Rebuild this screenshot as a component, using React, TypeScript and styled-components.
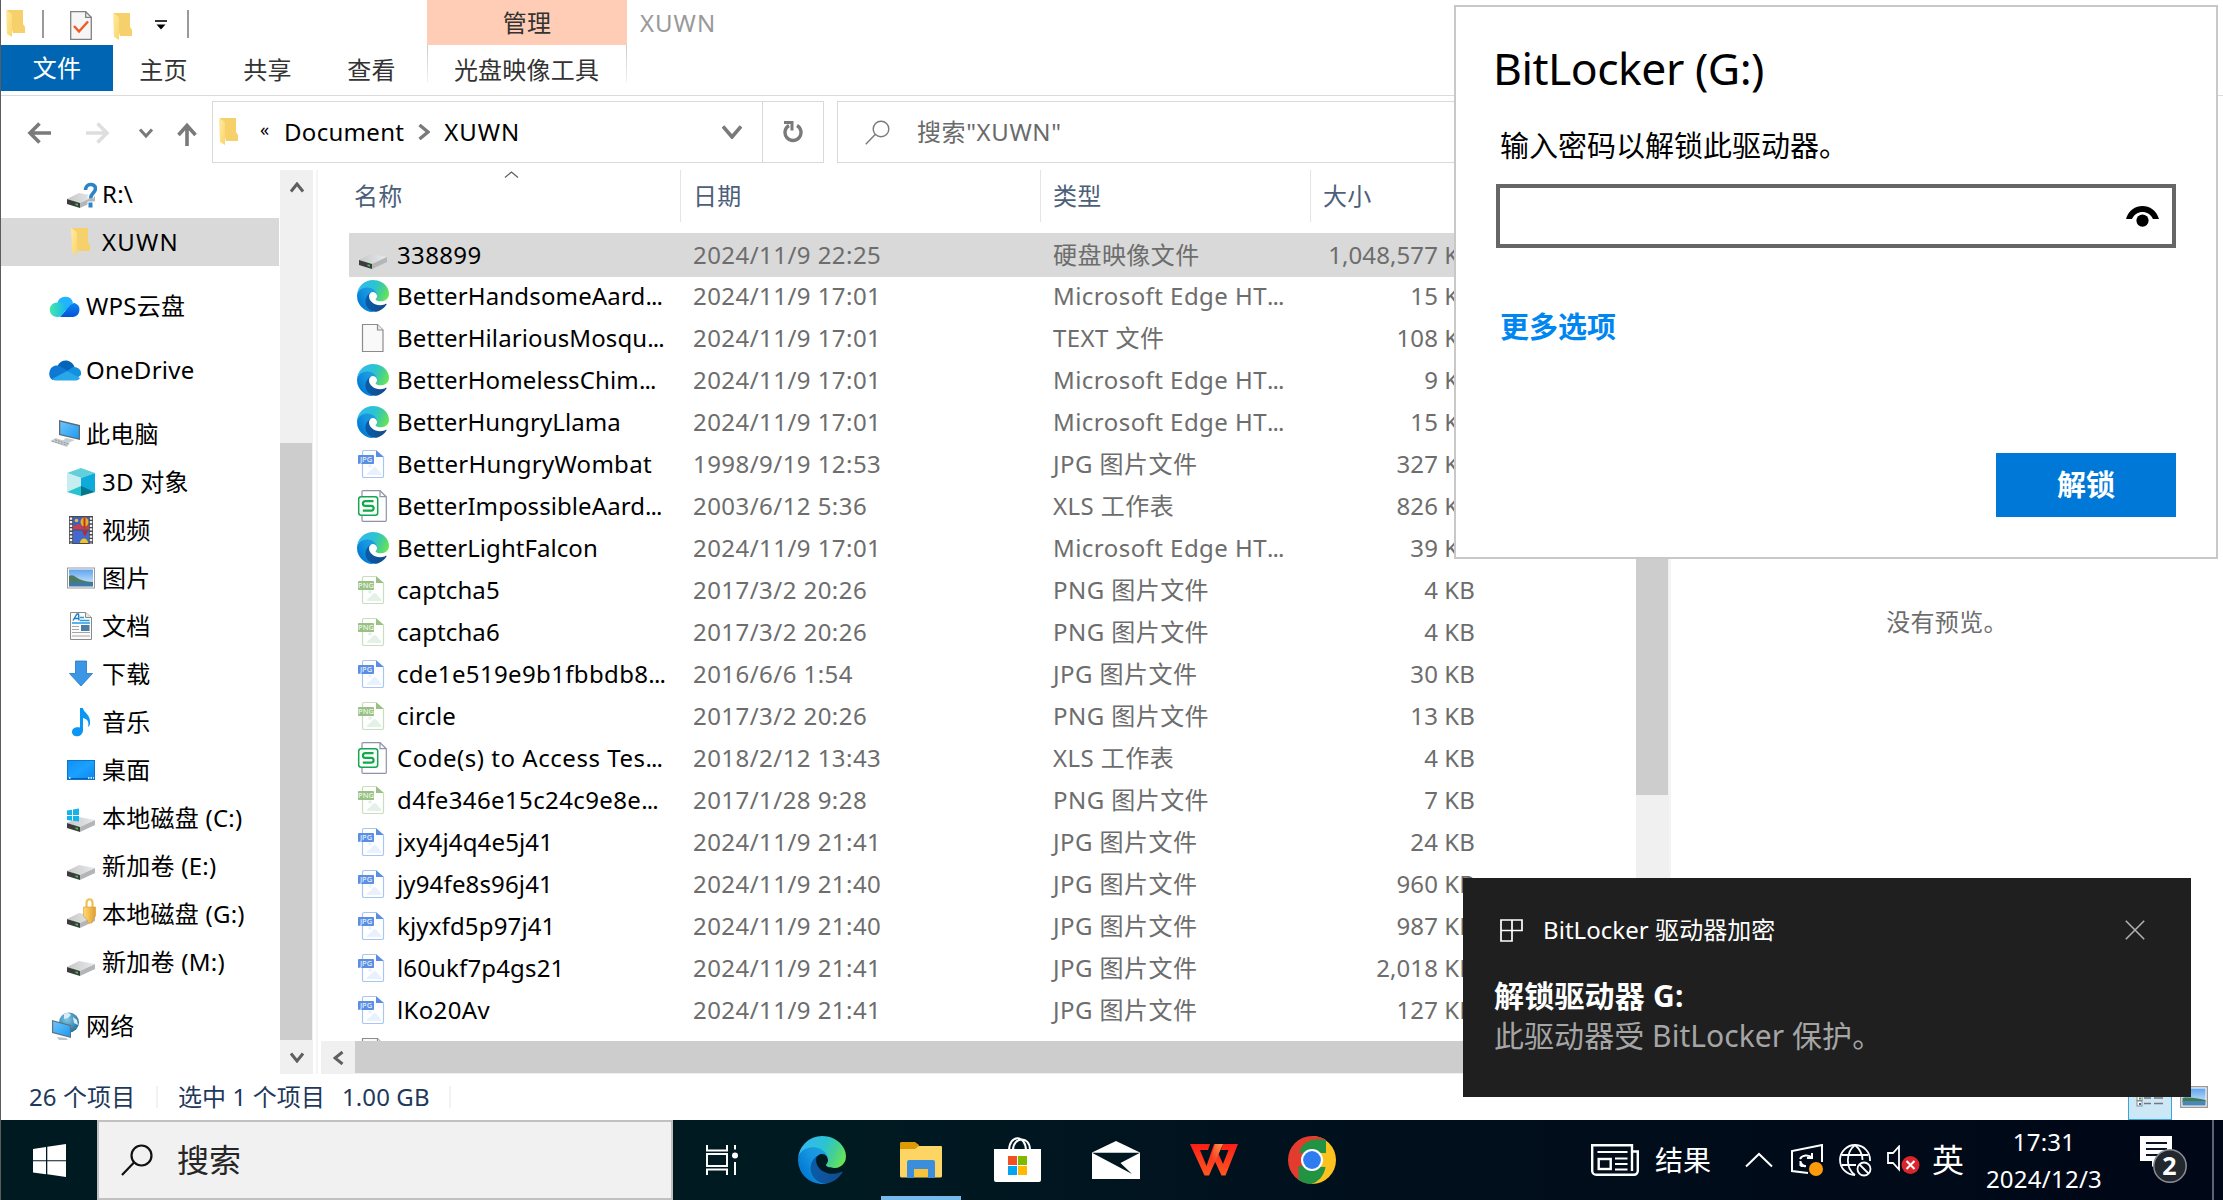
import React from 'react';
import styled, { createGlobalStyle } from 'styled-components';

const sans = `"Noto Sans", "Noto Sans CJK SC", sans-serif`;

const Global = createGlobalStyle`
  * { box-sizing: border-box; }
  body { margin: 0; background: #fff; font-family: ${sans}; overflow: hidden; }
  svg { display: block; flex: none; }
  button, input { font-family: inherit; padding: 0; margin: 0; border: 0; background: none; }
`;

/* ---------- layout ---------- */

const Desktop = styled.div`
  position: relative;
  width: 2223px;
  height: 1200px;
  display: flex;
  flex-direction: column;
  overflow: hidden;
  font-size: 24px;
  letter-spacing: 0.35px;
  line-height: 32px;
  color: #000;
  white-space: pre;
  border-left: 1px solid #5c5c5c;
`;

const Explorer = styled.main`
  height: 1120px;
  flex: none;
  display: flex;
  flex-direction: column;
`;

const TitleBar = styled.header`
  height: 45px;
  display: flex;
`;

const QuickAccess = styled.div`
  width: 426px;
  padding-top: 10px;
  padding-left: 5px;
  display: flex;
`;

const QuickItem = styled.span<{ $ml?: number; $mt?: number }>`
  margin-left: ${p => p.$ml ?? 0}px;
  margin-top: ${p => p.$mt ?? 0}px;
`;

const QuickRule = styled.span<{ $ml: number }>`
  width: 2px;
  height: 28px;
  margin-left: ${p => p.$ml}px;
  background: #9a9a9a;
`;

const ContextTab = styled.div`
  width: 200px;
  background: #ffcdb5;
  color: #333;
  text-align: center;
  line-height: 45px;
`;

const WindowTitle = styled.h1`
  margin: 0;
  padding-left: 13px;
  font-size: 24px;
  font-weight: 400;
  line-height: 46px;
  color: #999;
  letter-spacing: 1px;
`;

const Ribbon = styled.nav`
  height: 51px;
  display: flex;
  border-bottom: 1px solid #dadbdc;
`;

const RibbonTab = styled.button<{ $w: number; $active?: boolean }>`
  width: ${p => p.$w}px;
  height: 46px;
  padding-right: ${p => (p.$active ? 0 : 3)}px;
  font-size: 24px;
  line-height: ${p => (p.$active ? 46 : 50)}px;
  letter-spacing: 0.2px;
  color: ${p => (p.$active ? '#fff' : '#333')};
  background: ${p => (p.$active ? '#0066b4' : 'transparent')};
`;

const ToolTab = styled(RibbonTab)`
  height: 38px;
  margin-left: 2px;
  padding-right: 1px;
  border: solid;
  border-width: 0 1px;
  border-image: linear-gradient(#c8c8c8, #f4f4f4) 1;
`;

const NavBar = styled.div`
  height: 74px;
  padding-top: 5px;
  display: flex;
`;

const NavButtons = styled.div`
  width: 211px;
  height: 62px;
  padding-left: 26px;
  padding-top: 2px;
  display: flex;
  align-items: center;
`;

const AddressBar = styled.div`
  width: 612px;
  height: 62px;
  display: flex;
  align-items: center;
  border: 1px solid #d9d9d9;
`;

const Crumbs = styled.div`
  width: 550px;
  height: 60px;
  padding-left: 6px;
  padding-right: 20px;
  display: flex;
  align-items: center;
  border-right: 1px solid #d9d9d9;
`;

const Crumb = styled.span<{ $w: number; $track: number }>`
  width: ${p => p.$w}px;
  letter-spacing: ${p => p.$track}px;
`;

const Guillemet = styled.span`
  width: 24px;
  margin-left: 21px;
  margin-top: -6px;
  font-size: 18px;
`;

const DropSlot = styled.span`
  margin-left: auto;
`;

const Refresh = styled.button`
  flex: 1;
  display: flex;
  justify-content: center;
`;

const SearchBox = styled.div`
  flex: 1;
  height: 62px;
  margin-left: 13px;
  margin-right: 14px;
  padding-left: 27px;
  display: flex;
  align-items: center;
  gap: 27px;
  border: 1px solid #d9d9d9;
  color: #6a6a6a;
  letter-spacing: 0.6px;
`;

const Body = styled.div`
  height: 904px;
  display: flex;
`;

const Sidebar = styled.aside`
  width: 279px;
`;

const TreeRow = styled.div<{ $indent?: boolean; $gap?: boolean; $selected?: boolean }>`
  height: 48px;
  width: 278px;
  margin-top: ${p => (p.$gap ? 16 : 0)}px;
  padding-left: ${p => (p.$indent ? 64 : 48)}px;
  display: flex;
  align-items: center;
  gap: 5px;
  letter-spacing: ${p => (p.$selected ? 1.2 : 0.25)}px;
  background: ${p => (p.$selected ? '#d9d9d9' : 'transparent')};
`;

const TreeIcon = styled.span`
  width: 32px;
  height: 32px;
  flex: none;
  display: flex;
  align-items: center;
  justify-content: center;
`;

const VScroll = styled.div<{ $ruleGap: number }>`
  width: 33px;
  display: flex;
  flex-direction: column;
  background: #f0f0f0;
  margin-right: ${p => p.$ruleGap}px;
`;

const ScrollArrow = styled.span`
  height: 34px;
  min-width: 34px;
  display: flex;
  align-items: center;
  justify-content: center;
`;

const Thumb = styled.span<{ $top: number; $h: number }>`
  width: 32px;
  height: ${p => p.$h}px;
  margin-top: ${p => p.$top}px;
  margin-bottom: auto;
  background: #cdcdcd;
`;

const PaneRule = styled.span`
  width: 2px;
  background: #f4f4f4;
`;

const ListPane = styled.section`
  width: 1315px;
  margin-left: 3px;
  display: flex;
  flex-direction: column;
`;

const ListHead = styled.div`
  height: 51px;
  padding-left: 28px;
  display: grid;
  grid-template-columns: 332px 360px 270px 1fr;
`;

const HeadCell = styled.div<{ $first?: boolean }>`
  padding-left: ${p => (p.$first ? 5 : 12)}px;
  border-right: 1px solid #e5e5e5;
  line-height: 52px;
  color: #4c607a;
  display: flex;
`;

const SortMark = styled.span`
  margin-left: 101px;
  margin-top: 0;
`;

const Rows = styled.div`
  height: 820px;
  padding-top: 12px;
  overflow: hidden;
`;

const Row = styled.div<{ $selected?: boolean }>`
  height: ${p => (p.$selected ? 44 : 42)}px;
  margin: ${p => (p.$selected ? '0 0 -2px' : '0')};
  margin-left: 28px;
  padding-left: 8px;
  display: grid;
  grid-template-columns: 40px 296px 360px 200px 222px;
  align-items: center;
  background: ${p => (p.$selected ? '#d9d9d9' : 'transparent')};
`;

const Name = styled.span<{ $track: number }>`
  color: #000;
  letter-spacing: ${p => p.$track}px;
`;

const Dots = styled.span`
  letter-spacing: -0.9px;
`;

const Meta = styled.span<{ $right?: boolean }>`
  color: #6d6d6d;
  letter-spacing: ${p => (p.$right ? 0.1 : 0.45)}px;
  text-align: ${p => (p.$right ? 'right' : 'left')};
`;

const HScroll = styled.div`
  height: 33px;
  display: flex;
  background: #f0f0f0;
`;

const HThumb = styled.span`
  flex: 1;
  height: 32px;
  background: #cdcdcd;
`;

const Preview = styled.section`
  flex: 1;
  padding-top: 436px;
  text-align: center;
  color: #6d6d6d;
`;

const StatusBar = styled.footer`
  height: 46px;
  padding-left: 28px;
  padding-right: 15px;
  padding-bottom: 1px;
  display: flex;
  align-items: center;
  color: #1e395b;
  letter-spacing: 0.1px;
`;

const StatusText = styled.span<{ $w: number }>`
  width: ${p => p.$w}px;
`;

const StatusRule = styled.span<{ $mr: number }>`
  width: 2px;
  height: 22px;
  margin-right: ${p => p.$mr}px;
  background: #f2f2f2;
`;

const ViewToggle = styled.button`
  width: 44px;
  height: 45px;
  margin-left: auto;
  margin-right: 8px;
  margin-bottom: -1px;
  display: flex;
  align-items: center;
  justify-content: center;
  background: #cce8f6;
  border: 1px solid #3aa5dc;
`;

/* ---------- BitLocker dialog ---------- */

const Dialog = styled.section`
  position: absolute;
  left: 1453px;
  top: 5px;
  width: 764px;
  height: 554px;
  padding: 31px 40px 0 40px;
  background: #fff;
  border: 2px solid #c8c8c8;
  display: flex;
  flex-direction: column;
`;

const DialogTitle = styled.h2`
  margin: 0 0 0 -3px;
  font-size: 44.5px;
  font-weight: 400;
  line-height: 60px;
  letter-spacing: -0.5px;
`;

const DialogText = styled.p`
  margin: 33px 0 0 4px;
  font-size: 29px;
  line-height: 30px;
  letter-spacing: 0;
`;

const PasswordField = styled.label`
  height: 64px;
  margin-top: 23px;
  border: 4px solid #666;
  display: flex;
  align-items: center;
  padding-right: 13px;
`;

const PasswordInput = styled.input`
  flex: 1;
  height: 100%;
  outline: none;
`;

const MoreOptions = styled.a`
  margin: 64px 0 0 4px;
  font-size: 29px;
  line-height: 30px;
  font-weight: 700;
  letter-spacing: 0;
  color: #0086f0;
`;

const UnlockButton = styled.button`
  width: 180px;
  height: 64px;
  margin-top: 111px;
  align-self: flex-end;
  background: #0078d7;
  color: #fff;
  font-size: 29px;
  font-weight: 700;
  line-height: 64px;
`;

/* ---------- toast ---------- */

const Toast = styled.section`
  position: absolute;
  left: 1462px;
  top: 878px;
  width: 728px;
  height: 219px;
  padding: 36px 46px 0 31px;
  background: #1f1f1f;
  color: #fff;
`;

const ToastHead = styled.div`
  display: flex;
  align-items: center;
  height: 32px;
  padding-left: 6px;
`;

const ToastApp = styled.span`
  margin-left: 20px;
  margin-right: auto;
  letter-spacing: 0.05px;
`;

const ToastTitle = styled.div`
  margin-top: 30px;
  font-size: 30px;
  font-weight: 700;
  line-height: 40px;
  letter-spacing: 0.2px;
`;

const ToastBody = styled.div`
  font-size: 30px;
  line-height: 40px;
  letter-spacing: 0.05px;
  color: #a5a5a5;
`;

/* ---------- taskbar ---------- */

const Taskbar = styled.div`
  height: 80px;
  display: flex;
  color: #fff;
  background: linear-gradient(90deg, #001a22 0%, #001a22 38%, #010f1c 62%, #000717 100%);
`;

const StartButton = styled.button`
  width: 96px;
  display: flex;
  align-items: center;
  justify-content: center;
`;

const TaskSearch = styled.div`
  width: 576px;
  padding-left: 22px;
  padding-bottom: 1px;
  display: flex;
  align-items: center;
  gap: 24px;
  background: #f1f1f1;
  border: 2px solid #c0c0c0;
  color: #262626;
  font-size: 32px;
  letter-spacing: 0;
`;

const TaskApps = styled.div`
  display: flex;
`;

const TaskApp = styled.button<{ $active?: boolean; $w?: number }>`
  width: ${p => p.$w ?? 98}px;
  display: flex;
  align-items: center;
  justify-content: center;
  background: ${p => (p.$active ? 'linear-gradient(#76b9ed, #76b9ed) center bottom / 80px 4px no-repeat' : 'none')};
`;

const Tray = styled.div`
  margin-left: auto;
  display: flex;
  align-items: center;
  height: 80px;
`;

const TrayText = styled.span<{ $size: number; $w: number }>`
  width: ${p => p.$w}px;
  font-size: ${p => p.$size}px;
  margin-top: -1px;
  letter-spacing: 0;
`;

const TrayIcon = styled.span<{ $w: number }>`
  width: ${p => p.$w}px;
`;

const Clock = styled.div`
  width: 120px;
  margin-right: 36px;
  text-align: center;
  line-height: 37px;
  letter-spacing: 0.25px;
  margin-top: -1px;
`;

const ShowDesktop = styled.span`
  width: 11px;
  height: 80px;
  border-left: 2px solid #5c6470;
`;

/* ---------- icons ---------- */

const Gradients = styled.svg`
  position: absolute;
  width: 0;
  height: 0;
`;

const Defs = () => (
  <Gradients>
    <defs>
      <linearGradient id="edgeDark" x1=".2" y1=".7" x2="1" y2=".7"><stop offset="0" stopColor="#0c59a4" /><stop offset="1" stopColor="#114a8b" /></linearGradient>
      <linearGradient id="edgeBlue" x1=".9" y1=".3" x2=".2" y2=".9"><stop offset="0" stopColor="#1b9de2" /><stop offset=".4" stopColor="#1595df" /><stop offset=".8" stopColor="#0680d7" /><stop offset="1" stopColor="#0078d4" /></linearGradient>
      <linearGradient id="edgeTop" x1="0" y1=".3" x2="1" y2=".6"><stop offset="0" stopColor="#35b8f1" /><stop offset=".5" stopColor="#2bc3d2" /><stop offset=".75" stopColor="#45cf94" /><stop offset="1" stopColor="#66e556" /></linearGradient>
      <linearGradient id="folderFront" x1="0" y1="0" x2="1" y2="1"><stop offset="0" stopColor="#ffe9a6" /><stop offset="1" stopColor="#fbd768" /></linearGradient>
      <linearGradient id="driveTop" x1="0" y1="0" x2="1" y2="0"><stop offset="0" stopColor="#c6c7c9" /><stop offset="1" stopColor="#e9eaec" /></linearGradient>
      <linearGradient id="screen" x1="0" y1="0" x2="1" y2="1"><stop offset="0" stopColor="#6cc4fb" /><stop offset="1" stopColor="#1f9bf3" /></linearGradient>
      <linearGradient id="deskFill" x1="0" y1="0" x2="1" y2="1"><stop offset="0" stopColor="#1090f5" /><stop offset=".5" stopColor="#1ba1ff" /><stop offset="1" stopColor="#0c87ea" /></linearGradient>
      <linearGradient id="sky" x1="0" y1="0" x2="0" y2="1"><stop offset="0" stopColor="#5fa4ee" /><stop offset="1" stopColor="#dceefb" /></linearGradient>
      <linearGradient id="cloudL" x1="0" y1="0" x2="1" y2="0"><stop offset="0" stopColor="#42eaa6" /><stop offset="1" stopColor="#15b4f8" /></linearGradient>
      <linearGradient id="cloudR" x1="0" y1="0" x2="0" y2="1"><stop offset="0" stopColor="#0f86f2" /><stop offset="1" stopColor="#0552d8" /></linearGradient>
      <linearGradient id="lock" x1="0" y1="0" x2="1" y2="0"><stop offset="0" stopColor="#ffd978" /><stop offset="1" stopColor="#e2a02c" /></linearGradient>
      <radialGradient id="globe" cx=".4" cy=".35" r=".7"><stop offset="0" stopColor="#7fc8e6" /><stop offset="1" stopColor="#1d6c9c" /></radialGradient>
      <linearGradient id="wps" x1="0" y1="0" x2="0" y2="1"><stop offset="0" stopColor="#fb1e17" /><stop offset="1" stopColor="#ff5722" /></linearGradient>
      <linearGradient id="wpsFold" x1="0" y1="1" x2="1" y2="0"><stop offset="0" stopColor="#f32a1a" /><stop offset="1" stopColor="#ff9a4b" /></linearGradient>
    </defs>
  </Gradients>
);

const Edge = ({ size }: { size: number }) => (
  <svg width={size} height={size} viewBox="0 0 256 256">
    <path fill="url(#edgeDark)" d="M231 190.5c-3.4 1.8-6.9 3.4-10.5 4.7a101.5 101.5 0 0 1-35.9 6.5c-47.3 0-88.5-32.5-88.5-74.3a31.5 31.5 0 0 1 16.4-27.3c-42.8 1.8-53.8 46.4-53.8 72.5 0 74 68.1 81.4 82.8 81.4 7.9 0 19.8-2.3 27-4.6l1.3-.4a128.3 128.3 0 0 0 66.6-52.8 4 4 0 0 0-5.4-5.7z" />
    <path fill="url(#edgeBlue)" d="M105.7 241.4a79.2 79.2 0 0 1-22.7-21.3 80.7 80.7 0 0 1 29.5-120c3.2-1.5 8.5-4.1 15.6-4a32.4 32.4 0 0 1 25.7 13 31.9 31.9 0 0 1 6.3 18.7c0-.2 24.5-79.6-80-79.6-43.9 0-80 41.6-80 78.2a130.2 130.2 0 0 0 12.1 56 128 128 0 0 0 156.4 67 75.5 75.5 0 0 1-62.8-8z" />
    <path fill="url(#edgeTop)" d="M152.3 148.9c-.9 1-3.4 2.5-3.4 5.6 0 2.6 1.7 5.1 4.7 7.3 14.4 10 41.5 8.7 41.5 8.7a59.7 59.7 0 0 0 30.3-8.3 61.4 61.4 0 0 0 30.4-52.9c.3-22.4-8-37.3-11.3-43.9C223.5 23.9 177.7 0 128 0a128 128 0 0 0-128 126.2c.5-36.5 36.8-66 80-66 3.5 0 23.5.3 42 10a72.6 72.6 0 0 1 30.9 29.3c6.1 10.6 7.2 24.1 7.2 29.5s-2.7 13.3-7.8 19.9z" />
  </svg>
);

const FolderSlim = () => (
  <svg width="20" height="28" viewBox="0 0 20 28">
    <path d="M1 0h16v14l2 3v6H7z" fill="#f6d06a" />
    <path d="M0 0l6 4v23l-5-3z" fill="url(#folderFront)" />
  </svg>
);

const DriveBase = () => (
  <g>
    <path d="M2 21L14 15l16 3-15 7z" fill="url(#driveTop)" />
    <path d="M15 25l15-7v5l-15 7z" fill="#b4b5b7" />
    <path d="M2 21l13 4v5L2 26z" fill="#3c3c3c" />
    <path d="M10.500 25.200l2.500.8v1.800l-2.500-.8z" fill="#2fd23a" />
  </g>
);

const Drive = () => (
  <svg width="32" height="32" viewBox="0 0 32 32"><DriveBase /></svg>
);

const DriveUnknown = () => (
  <svg width="32" height="32" viewBox="0 0 32 32">
    <DriveBase />
    <path d="M20.500 12c0-7 10-7 10-1.500 0 4.500-5 4.500-5 10" fill="none" stroke="#fff" strokeWidth="6" />
    <path d="M20.500 12c0-7 10-7 10-1.500 0 4.500-5 4.500-5 10" fill="none" stroke="#2b84c9" strokeWidth="3.600" />
    <rect x="23" y="24" width="5" height="6" fill="#2b84c9" stroke="#fff" />
  </svg>
);

const DriveWindows = () => (
  <svg width="32" height="32" viewBox="0 0 32 32">
    <DriveBase />
    <path d="M2 8.500l5-.8V13H2zM8 7.500l6-.9V13H8zM2 14h5v4.700L2 18zM8 14h6v5.500l-6-.7z" fill="#12b4ee" />
  </svg>
);

const DriveLocked = () => (
  <svg width="32" height="32" viewBox="0 0 32 32">
    <DriveBase />
    <path d="M21.500 9V5c0-5 6-5 6 0v4" fill="none" stroke="#eec05a" strokeWidth="2.200" />
    <path d="M18.500 9h12v9c-2 3-3 3-3.500 7h-4c0-4-3-4-4.500-7z" fill="url(#lock)" stroke="#d69a30" strokeWidth=".6" />
  </svg>
);

const WpsCloud = () => (
  <svg width="32" height="32" viewBox="0 0 32 32">
    <path d="M8.500 13a8 8 0 0 1 15.500-.5L18 22z" fill="#23b4ff" />
    <path d="M11 27l9.500-11c2-2.500 4-3 5-3a7.200 7.200 0 0 1-1.500 14z" fill="url(#cloudR)" />
    <path d="M8 12.500c5-.5 7 1.500 10 5.500L13 25c-2 2-3.500 2-5 2a7.200 7.200 0 0 1 0-14.500z" fill="url(#cloudL)" />
  </svg>
);

const OneDrive = () => (
  <svg width="32" height="32" viewBox="0 0 32 32">
    <path d="M8.500 12c4-8 14-7 17 1l-8 5z" fill="#0364b8" />
    <path d="M.5 18c1-6 7-8 12-5l10 6-19 7c-2-1-4-4-3-8z" fill="#0f78d4" />
    <path d="M18 17l6-4c5 0 9 3 8 8l-4 3z" fill="#1490df" />
    <path d="M3 25l15-8 13 7c-1 2-3 2.500-5 2.500H8c-2 0-4-.5-5-1.500z" fill="#28a8ea" />
  </svg>
);

const ThisPc = () => (
  <svg width="32" height="32" viewBox="0 0 32 32">
    <path d="M10 2l21 5v15l-21-5z" fill="#5f6b74" />
    <path d="M11.300 3.800L29.700 8.200v12.200l-18.400-4.400z" fill="url(#screen)" />
    <path d="M17 20l9 2-7 3-6-2z" fill="#c7ced3" />
    <path d="M1 23l6-3 14 5-3 4z" fill="#c9cdd0" />
    <path d="M3 23.300l15 4M6 21.800l13 4" stroke="#8f979c" strokeDasharray="2 1" />
  </svg>
);

const Cube = () => (
  <svg width="32" height="32" viewBox="0 0 32 32">
    <path d="M2 7l14-5 14 5-14 5z" fill="#62cfdb" />
    <path d="M2 7l14 5v9L2 26z" fill="#c6eef0" />
    <path d="M30 7l-14 5v9l14 5z" fill="#0cabdc" />
    <path d="M2 26l14-6v10z" fill="#27c3cf" />
    <path d="M30 26l-14-6v10z" fill="#05778c" />
  </svg>
);

const Film = () => (
  <svg width="32" height="32" viewBox="0 0 32 32">
    <rect x="4" y="2" width="24" height="28" fill="#4a4a4a" />
    <path d="M6 3.500v26M26 3.500v26" stroke="#f2f2f2" strokeWidth="2.400" strokeDasharray="2.200 1.400" />
    <rect x="8" y="3" width="16" height="12.500" fill="#3b5fc6" />
    <rect x="8" y="16.500" width="16" height="12.500" fill="#4169d0" />
    <path d="M8 12l6-2 4 3 6-2v4.500H8z" fill="#c43f52" />
    <ellipse cx="19.500" cy="8" rx="4" ry="4.500" fill="#e8b21c" />
    <path d="M19.500 3.500v11" stroke="#c43022" strokeWidth="2" />
    <path d="M17 17h6l-3 5z" fill="#c8221e" />
    <path d="M15 29c0-6 8-6 8 0z" fill="#f0c51e" />
    <circle cx="11.500" cy="6.500" r="1.800" fill="#e6c02c" />
  </svg>
);

const PictureIcon = () => (
  <svg width="32" height="32" viewBox="0 0 32 32">
    <rect x="2.500" y="6" width="27" height="20" fill="#fff" stroke="#9a9a9a" />
    <rect x="4" y="7.500" width="24" height="17" fill="url(#sky)" />
    <path d="M4 14c4-2 6 1 10 3s10 3 14 3v1H4z" fill="#4d7b62" />
    <path d="M4 20.500h24v4H4z" fill="#3e7aa8" />
  </svg>
);

const DocIcon = () => (
  <svg width="32" height="32" viewBox="0 0 32 32">
    <path d="M5.500 2.500h15l6 5v22h-21z" fill="#fbfbfb" stroke="#8a8a8a" />
    <path d="M20.500 2.500v5h6" fill="#e6e6e6" stroke="#8a8a8a" />
    <path d="M8 10.500L12 4h1.500l.5 6.500M9.500 8.500h4" fill="none" stroke="#1c7cc4" strokeWidth="1.400" />
    <path d="M15 7.500h4M15 10.500h9.500M7 13h18" stroke="#2a9bdc" strokeWidth="1.300" />
    <path d="M7 16.500h7M7 19.500h7M7 22.500h18M7 26h18" stroke="#a5a5a5" strokeWidth="1.200" />
    <rect x="16" y="15" width="8.500" height="6" fill="#4b7da5" />
  </svg>
);

const DownArrow = () => (
  <svg width="32" height="32" viewBox="0 0 32 32">
    <path d="M10.500 3h11v12.500h6L16 28 4.500 15.500h6z" fill="#3b97e6" stroke="#2379c0" strokeWidth=".8" />
  </svg>
);

const Note = () => (
  <svg width="32" height="32" viewBox="0 0 32 32">
    <path d="M15 2h3c.5 5 8 6 7 16-.3 1.500-1.300 2.500-2 3 1.500-6-1-8-5-9v12c0 8-11 8-11 2 0-4 4-5.500 8-4.500z" fill="#0a96f5" />
  </svg>
);

const DesktopIcon = () => (
  <svg width="32" height="32" viewBox="0 0 32 32">
    <rect x="2.500" y="6.500" width="27" height="19" fill="url(#deskFill)" stroke="#0c74cb" />
    <path d="M3 24.500h26" stroke="#0a5ca8" />
    <path d="M4 24h1.500M23 24h1.500M25.500 24H27M28 24h1" stroke="#fff" strokeWidth="1.400" />
  </svg>
);

const NetworkIcon = () => (
  <svg width="32" height="32" viewBox="0 0 32 32">
    <circle cx="20" cy="12.500" r="10" fill="url(#globe)" />
    <path d="M15 4c3-2 6-1 7 1l-3 3-4 1zM24 7l4 3 1 5-4-2z" fill="#d7ecf4" />
    <path d="M3 10l19 5v13L3 23z" fill="#5d7484" />
    <path d="M4.200 11.500l16.600 4.400v10.600L4.200 22z" fill="url(#screen)" />
    <path d="M8 27l9 1 2 2h-9z" fill="#bcc5cb" />
  </svg>
);

const BlankFile = () => (
  <svg width="32" height="32" viewBox="0 0 32 32">
    <path d="M5.500 2.500h15l5.500 5.500v21.500H5.500z" fill="#f9f9f9" stroke="#8c8c8c" strokeWidth="1.200" />
    <path d="M20.500 2.500v5.500h5.500" fill="#ececec" stroke="#8c8c8c" strokeWidth="1.200" />
  </svg>
);

const TagText = styled.text`
  font: 500 7.500px ${sans};
  letter-spacing: 0;
`;

const ImageFile = ({ kind }: { kind: 'jpg' | 'png' }) => {
  const c = kind === 'jpg'
    ? { main: '#5b8fe3', line: '#a9c5f2', soft: '#e8f1fd', ink: '#e6effc' }
    : { main: '#99c184', line: '#c9ddbf', soft: '#e4f1e8', ink: '#eef6ea' };
  return (
    <svg width="32" height="32" viewBox="0 0 32 32">
      <path d="M19 2.500H7a1.500 1.500 0 0 0-1.500 1.500v24A1.500 1.500 0 0 0 7 29.500h18a1.500 1.500 0 0 0 1.500-1.500V9" fill="#fff" stroke={c.line} strokeWidth="1.200" />
      <path d="M19 2l8 7h-8z" fill={c.main} />
      <path d="M10 27c0-3 3-3 5-6 1.500-2.500 4-2.500 5.500 0 1.500 3 4 3 4 6z" fill={c.soft} />
      <circle cx="13" cy="18" r="1.800" fill={c.soft} />
      <rect x="1" y="7" width="16" height="9" rx=".8" fill={c.main} />
      <TagText x="9" y="14.300" textAnchor="middle" fill={c.ink}>{kind.toUpperCase()}</TagText>
    </svg>
  );
};

const SheetFile = () => (
  <svg width="32" height="32" viewBox="0 0 32 32">
    <path d="M7 .7h16l6.300 6v23.600a1 1 0 0 1-1 1H6a1 1 0 0 1-1-1V1.700A1 1 0 0 1 6 .7z" fill="#fff" stroke="#8d94a5" strokeWidth="1.200" />
    <path d="M23 .7v6h6.300" fill="none" stroke="#8d94a5" strokeWidth="1.200" />
    <rect x="1.700" y="6.700" width="19" height="18.600" rx="2.500" fill="#fff" stroke="#12a84c" strokeWidth="1.500" />
    <path d="M16.500 11.200H8.200a2 2 0 0 0 0 4.600h6a2.400 2.400 0 0 1 0 4.800H5.800" fill="none" stroke="#12a84c" strokeWidth="2.200" />
  </svg>
);

const Chevron = ({ dir, w, h, color = '#5f5f5f', sw = 3 }: { dir: 'up' | 'down' | 'left' | 'right'; w: number; h: number; color?: string; sw?: number }) => {
  const d = {
    up: `M1 ${h - 1.5}L${w / 2} 2L${w - 1} ${h - 1.5}`,
    down: `M1 1.500L${w / 2} ${h - 2}L${w - 1} 1.500`,
    left: `M${w - 1.5} 1L2 ${h / 2}L${w - 1.5} ${h - 1}`,
    right: `M1.500 1L${w - 2} ${h / 2}L1.500 ${h - 1}`,
  }[dir];
  return <svg width={w} height={h}><path d={d} fill="none" stroke={color} strokeWidth={sw} /></svg>;
};

const NavArrows = () => (
  <svg width="172" height="28" viewBox="27 119 172 28">
    <path d="M51 133H31M39.500 123.500L30 133l9.500 9.500" fill="none" stroke="#7a7a7a" strokeWidth="3.600" />
    <path d="M86 133h20M97.500 123.500L107 133l-9.500 9.500" fill="none" stroke="#dedede" strokeWidth="3.600" />
    <path d="M140 129.500l6 6.500 6-6.500" fill="none" stroke="#7a7a7a" strokeWidth="3" />
    <path d="M187 146v-20M178.500 135l8.500-9.500 8.500 9.500" fill="none" stroke="#7a7a7a" strokeWidth="3.600" />
  </svg>
);

const Magnifier = ({ size, color, sw }: { size: number; color: string; sw: number }) => (
  <svg width={size} height={size} viewBox="0 0 32 32">
    <circle cx="20.500" cy="11.500" r="10" fill="none" stroke={color} strokeWidth={sw} />
    <path d="M13 18.500L1 31" stroke={color} strokeWidth={sw} />
  </svg>
);

const RefreshIcon = () => (
  <svg width="20" height="22" viewBox="0 0 20 22">
    <path d="M14 4.500a8 8 0 1 1-8 0" fill="none" stroke="#7a7a7a" strokeWidth="3.400" />
    <path d="M1 1.500h8v8" fill="none" stroke="#7a7a7a" strokeWidth="3" />
  </svg>
);

const PageCheck = () => (
  <svg width="22" height="29" viewBox="0 0 22 29">
    <path d="M.7.700h15l5.600 5.600v22H.7z" fill="#f6f6f6" stroke="#808080" strokeWidth="1.300" />
    <path d="M15.700.700v5.600h5.600" fill="none" stroke="#808080" strokeWidth="1.300" />
    <path d="M4 15l5 5.500 9-10" fill="none" stroke="#f15a22" strokeWidth="2.400" />
  </svg>
);

const CustomizeMark = () => (
  <svg width="12" height="11" viewBox="0 0 12 11">
    <path d="M0 1h12" stroke="#000" strokeWidth="1.600" />
    <path d="M1.500 4.500h9L6 9.500z" fill="#000" />
  </svg>
);

const Eye = () => (
  <svg width="33" height="21" viewBox="0 0 33 21">
    <path d="M0 13C5-4.300 28-4.300 33 13H27C23 3.500 10 3.500 6 13z" fill="#000" />
    <circle cx="16.500" cy="14.600" r="6.100" fill="#000" />
  </svg>
);

const DetailsView = () => (
  <svg width="28" height="26" viewBox="0 0 28 26">
    {[2, 7.5, 13, 18.5].map(y => (
      <g key={y}>
        <rect x="1" y={y - 1.5} width="5" height="5" fill="#fff" stroke="#8a8a8a" />
        <path d={`M8 ${y + 1}h7M18 ${y + 1}h9`} stroke="#777" strokeWidth="1.300" />
      </g>
    ))}
    <path d="M3 9h2" stroke="#d23c2a" strokeWidth="2" /><path d="M3 14.500h2" stroke="#4c9a52" strokeWidth="2" /><path d="M3 20h2" stroke="#2a6cc0" strokeWidth="2" />
  </svg>
);

const ThumbView = () => (
  <svg width="28" height="22" viewBox="0 0 28 22">
    <rect x=".7" y=".7" width="26.600" height="20.600" fill="#fff" stroke="#9a9a9a" strokeWidth="1.400" />
    <rect x="2.500" y="2.500" width="23" height="17" fill="url(#sky)" />
    <path d="M2.500 12c6-1 14 0 23 2v2h-23z" fill="#3d7a50" />
    <path d="M2.500 15h23v4.500h-23z" fill="#4b86b5" />
  </svg>
);

const WindowsLogo = () => (
  <svg width="33" height="33" viewBox="0 0 33 33">
    <path d="M0 5l13-2v13.200H0zM14.300 2.800L33 0v16.200H14.300zM0 17.300h13v13L0 28.500zM14.300 17.300H33V33l-18.700-2.700z" fill="#fff" />
  </svg>
);

const TaskView = () => (
  <svg width="32" height="32" viewBox="0 0 32 32">
    <g fill="none" stroke="#fff" strokeWidth="2">
      <path d="M1 1v5.500h20V1M1 31v-5.500h20V31" />
      <rect x="1" y="10" width="20" height="12" />
      <path d="M29 1v4.500M29 18v13" />
    </g>
    <circle cx="29" cy="11.500" r="3" fill="#fff" />
  </svg>
);

const ExplorerApp = () => (
  <svg width="42" height="36" viewBox="0 0 42 36">
    <path d="M1 0h14l4 3v6H0V1z" fill="#dd9a05" />
    <path d="M0 7h15l4-3h22a1 1 0 0 1 1 1v29a1.500 1.500 0 0 1-1.500 1.500h-39A1.500 1.500 0 0 1 0 34z" fill="#fdd564" />
    <path d="M7 36V20a2 2 0 0 1 2-2h24a2 2 0 0 1 2 2v16h-7v-9H14v9z" fill="#3a8edb" />
    <path d="M14 27h14v8H14z" fill="#f6c33c" />
  </svg>
);

const StoreApp = () => (
  <svg width="48" height="46" viewBox="0 0 48 46">
    <path d="M15 14C15-3 32-3 32 14M19 13C19 0 36-2 36 13" fill="none" stroke="#fff" strokeWidth="2" />
    <path d="M0 12h47v31a2 2 0 0 1-2 2H2a2 2 0 0 1-2-2z" fill="#fff" />
    <path d="M14 19h9v9h-9z" fill="#f25022" /><path d="M24 19h9v9h-9z" fill="#7fba00" />
    <path d="M14 29h9v9h-9z" fill="#00a4ef" /><path d="M24 29h9v9h-9z" fill="#ffb900" />
  </svg>
);

const MailApp = () => (
  <svg width="48" height="38" viewBox="0 0 48 38">
    <path d="M0 11.500L24 0l24 11.500V38H0z" fill="#fff" />
    <path d="M0 11.800h48L28.500 22 40 33z" fill="#001720" />
  </svg>
);

const WpsApp = () => (
  <svg width="48" height="32" viewBox="0 0 48 32">
    <path d="M0 0h20l-2 6h-8l6.500 16L24 0h9l-14 31.500h-4.500z" fill="url(#wps)" />
    <path d="M33 0h15L35.500 31.500h-4L22 11l3.500-8 7.500 17 5.500-14H31z" fill="url(#wps)" />
    <path d="M25 0h8l-9 20-3-7z" fill="url(#wpsFold)" />
  </svg>
);

const ChromeApp = () => (
  <svg width="48" height="48" viewBox="0 0 48 48">
    <path d="M24 0a24 24 0 0 0 0 48z" fill="#e33b2e" />
    <path d="M24 0a24 24 0 0 1 0 48z" fill="#fcc31e" />
    <path d="M24 0q8 0 14 4v4H23z" fill="#e33b2e" />
    <path d="M10.500 30V44Q17 48 23.500 48C30 46 36 40 37.500 31z" fill="#229342" />
    <path d="M11 17C13 8 22 1 38 4V17z" fill="#229342" />
    <circle cx="24" cy="24" r="11" fill="#fff" />
    <circle cx="24" cy="24" r="8.900" fill="#2f7cf0" />
  </svg>
);

const NewsIcon = () => (
  <svg width="48" height="32" viewBox="0 0 48 32">
    <g fill="none" stroke="#fff" strokeWidth="2.400">
      <path d="M41 7V1.200H1.200V27a4 4 0 0 0 4 3.800H43a4 4 0 0 0 3.800-4V7.500H41V27" />
      <path d="M6.500 8h30M24 14.500h12.500M24 20h12.500M24 25.500h12.500" strokeWidth="2.200" />
      <rect x="7.700" y="15" width="12" height="10" />
    </g>
  </svg>
);

const SyncIcon = () => (
  <svg width="32" height="32" viewBox="0 0 32 32">
    <g fill="none" stroke="#fff" strokeWidth="2">
      <path d="M17 29L1 27V7l30-6v17" />
      <path d="M9 15a7 6 0 0 1 12-1M21 9v5h-5M15 22H9.500M9.500 17v5M9.500 18c1 3 3 4 5 4.500" />
    </g>
    <circle cx="25" cy="25" r="7" fill="#ff9a0c" />
  </svg>
);

const GlobeOff = () => (
  <svg width="33" height="33" viewBox="0 0 33 33">
    <g fill="none" stroke="#fff" strokeWidth="1.800">
      <path d="M16 31A15 15 0 1 1 31 17" />
      <path d="M16 31C6 24 7 8 16 1c6 5 7.500 10 7.500 15M3 11h26M3 21h14" />
      <circle cx="25" cy="25" r="6.500" />
      <path d="M20.500 20.500l9 9" />
    </g>
  </svg>
);

const Muted = () => (
  <svg width="33" height="30" viewBox="0 0 33 30">
    <path d="M1 8h5l6-6.500v23L6 18H1z" fill="none" stroke="#fff" strokeWidth="1.800" />
    <circle cx="23.500" cy="20" r="9" fill="#d8262c" />
    <path d="M19.500 16l8 8M27.500 16l-8 8" stroke="#fff" strokeWidth="2" />
  </svg>
);

const BadgeText = styled.text`
  font: 700 25px ${sans};
  letter-spacing: 0;
`;

const Notifications = () => (
  <svg width="48" height="48" viewBox="0 0 48 48">
    <path d="M0 0h32v25H18l-6 6v-6H0z" fill="#fff" />
    <path d="M6 7h21M6 13h21M6 19h14" stroke="#0a1420" strokeWidth="2.200" />
    <circle cx="30" cy="30" r="16.200" fill="#23272e" stroke="#8b8f96" strokeWidth="1.500" />
    <BadgeText x="29.500" y="39" textAnchor="middle" fill="#fff">2</BadgeText>
  </svg>
);

const ToastIcon = () => (
  <svg width="23" height="23" viewBox="0 0 23 23">
    <path d="M1 1h21v10.500H1zM1 11.500V22h11V1" fill="none" stroke="#fff" strokeWidth="1.700" />
  </svg>
);

const CloseIcon = () => (
  <svg width="20" height="20" viewBox="0 0 20 20">
    <path d="M.8.800l18.400 18.400M19.200.800L.8 19.200" stroke="#b0b0b0" strokeWidth="1.600" />
  </svg>
);

/* ---------- data ---------- */

type Kind = 'drive' | 'edge' | 'blank' | 'jpg' | 'png' | 'xls';

const fileIcon: Record<Kind, React.ReactNode> = {
  drive: <Drive />,
  edge: <Edge size={32} />,
  blank: <BlankFile />,
  jpg: <ImageFile kind="jpg" />,
  png: <ImageFile kind="png" />,
  xls: <SheetFile />,
};

const typeName: Record<Kind, string> = {
  drive: '硬盘映像文件',
  edge: 'Microsoft Edge HT...',
  blank: 'TEXT 文件',
  jpg: 'JPG 图片文件',
  png: 'PNG 图片文件',
  xls: 'XLS 工作表',
};

/* kind, name, date, size, tracking of the name */
const files: [Kind, string, string, string, number][] = [
  ['drive', '338899', '2024/11/9 22:25', '1,048,577 KB', 0.35],
  ['edge', 'BetterHandsomeAard...', '2024/11/9 17:01', '15 KB', 0.15],
  ['blank', 'BetterHilariousMosqu...', '2024/11/9 17:01', '108 KB', 0.12],
  ['edge', 'BetterHomelessChim...', '2024/11/9 17:01', '9 KB', 0.13],
  ['edge', 'BetterHungryLlama', '2024/11/9 17:01', '15 KB', 0.08],
  ['jpg', 'BetterHungryWombat', '1998/9/19 12:53', '327 KB', 0.27],
  ['xls', 'BetterImpossibleAard...', '2003/6/12 5:36', '826 KB', 0.08],
  ['edge', 'BetterLightFalcon', '2024/11/9 17:01', '39 KB', 0.05],
  ['png', 'captcha5', '2017/3/2 20:26', '4 KB', 0.1],
  ['png', 'captcha6', '2017/3/2 20:26', '4 KB', 0.1],
  ['jpg', 'cde1e519e9b1fbbdb8...', '2016/6/6 1:54', '30 KB', 0.35],
  ['png', 'circle', '2017/3/2 20:26', '13 KB', 0.1],
  ['xls', 'Code(s) to Access Tes...', '2018/2/12 13:43', '4 KB', 0.53],
  ['png', 'd4fe346e15c24c9e8e...', '2017/1/28 9:28', '7 KB', 0.37],
  ['jpg', 'jxy4j4q4e5j41', '2024/11/9 21:41', '24 KB', 0.15],
  ['jpg', 'jy94fe8s96j41', '2024/11/9 21:40', '960 KB', 0.15],
  ['jpg', 'kjyxfd5p97j41', '2024/11/9 21:40', '987 KB', 0.15],
  ['jpg', 'l60ukf7p4gs21', '2024/11/9 21:41', '2,018 KB', 0.15],
  ['jpg', 'lKo20Av', '2024/11/9 21:41', '127 KB', 0.35],
];

const withDots = (s: string) =>
  s.endsWith('...') ? <>{s.slice(0, -3)}<Dots>...</Dots></> : s;

const tree: { label: string; icon: React.ReactNode; indent?: boolean; gap?: boolean; selected?: boolean }[] = [
  { label: 'R:\\', icon: <DriveUnknown />, indent: true },
  { label: 'XUWN', icon: <FolderSlim />, indent: true, selected: true },
  { label: 'WPS云盘', icon: <WpsCloud />, gap: true },
  { label: 'OneDrive', icon: <OneDrive />, gap: true },
  { label: '此电脑', icon: <ThisPc />, gap: true },
  { label: '3D 对象', icon: <Cube />, indent: true },
  { label: '视频', icon: <Film />, indent: true },
  { label: '图片', icon: <PictureIcon />, indent: true },
  { label: '文档', icon: <DocIcon />, indent: true },
  { label: '下载', icon: <DownArrow />, indent: true },
  { label: '音乐', icon: <Note />, indent: true },
  { label: '桌面', icon: <DesktopIcon />, indent: true },
  { label: '本地磁盘 (C:)', icon: <DriveWindows />, indent: true },
  { label: '新加卷 (E:)', icon: <Drive />, indent: true },
  { label: '本地磁盘 (G:)', icon: <DriveLocked />, indent: true },
  { label: '新加卷 (M:)', icon: <Drive />, indent: true },
  { label: '网络', icon: <NetworkIcon />, gap: true },
];

/* ---------- app ---------- */

export default function App() {
  return (
    <Desktop>
      <Global />
      <Defs />
      <Explorer>
        <TitleBar>
          <QuickAccess>
            <QuickItem><FolderSlim /></QuickItem>
            <QuickRule $ml={16} />
            <QuickItem $ml={26} $mt={1}><PageCheck /></QuickItem>
            <QuickItem $ml={21} $mt={3}><FolderSlim /></QuickItem>
            <QuickItem $ml={22} $mt={10}><CustomizeMark /></QuickItem>
            <QuickRule $ml={20} />
          </QuickAccess>
          <ContextTab>管理</ContextTab>
          <WindowTitle>XUWN</WindowTitle>
        </TitleBar>
        <Ribbon>
          <RibbonTab $w={112} $active>文件</RibbonTab>
          <RibbonTab $w={104}>主页</RibbonTab>
          <RibbonTab $w={104}>共享</RibbonTab>
          <RibbonTab $w={104}>查看</RibbonTab>
          <ToolTab $w={200}>光盘映像工具</ToolTab>
        </Ribbon>
        <NavBar>
          <NavButtons><NavArrows /></NavButtons>
          <AddressBar>
            <Crumbs>
              <FolderSlim />
              <Guillemet>«</Guillemet>
              <Crumb $w={134} $track={0.3}>Document</Crumb>
              <Chevron dir="right" w={12} h={16} color="#7a7a7a" sw={3.4} />
              <Crumb $w={96} $track={0.9}>{'  XUWN'}</Crumb>
              <DropSlot><Chevron dir="down" w={20} h={14} color="#7a7a7a" sw={3.6} /></DropSlot>
            </Crumbs>
            <Refresh aria-label="刷新"><RefreshIcon /></Refresh>
          </AddressBar>
          <SearchBox>
            <Magnifier size={25} color="#7a7a7a" sw={1.8} />
            搜索"XUWN"
          </SearchBox>
        </NavBar>
        <Body>
          <Sidebar>
            {tree.map(t => (
              <TreeRow key={t.label} $indent={t.indent} $gap={t.gap} $selected={t.selected}>
                <TreeIcon>{t.icon}</TreeIcon>
                {t.label}
              </TreeRow>
            ))}
          </Sidebar>
          <VScroll $ruleGap={3}>
            <ScrollArrow><Chevron dir="up" w={14} h={11} /></ScrollArrow>
            <Thumb $top={239} $h={597} />
            <ScrollArrow><Chevron dir="down" w={14} h={11} /></ScrollArrow>
          </VScroll>
          <PaneRule />
          <ListPane>
            <ListHead>
              <HeadCell $first>名称<SortMark><Chevron dir="up" w={15} h={9} sw={1.3} /></SortMark></HeadCell>
              <HeadCell>日期</HeadCell>
              <HeadCell>类型</HeadCell>
              <HeadCell>大小</HeadCell>
            </ListHead>
            <Rows>
              {files.map(([kind, name, date, size, track], i) => (
                <Row key={name} $selected={i === 0}>
                  {fileIcon[kind]}
                  <Name $track={track}>{withDots(name)}</Name>
                  <Meta>{date}</Meta>
                  <Meta>{withDots(typeName[kind])}</Meta>
                  <Meta $right>{size}</Meta>
                </Row>
              ))}
              <Row><BlankFile /></Row>
            </Rows>
            <HScroll>
              <ScrollArrow><Chevron dir="left" w={11} h={14} /></ScrollArrow>
              <HThumb />
            </HScroll>
          </ListPane>
          <VScroll $ruleGap={0}>
            <Thumb $top={34} $h={591} />
          </VScroll>
          <PaneRule />
          <Preview>没有预览。</Preview>
        </Body>
        <StatusBar>
          <StatusText $w={127}>26 个项目</StatusText>
          <StatusRule $mr={20} />
          <StatusText $w={164}>选中 1 个项目</StatusText>
          <StatusText $w={107}>1.00 GB</StatusText>
          <StatusRule $mr={0} />
          <ViewToggle aria-label="详细信息"><DetailsView /></ViewToggle>
          <ThumbView />
        </StatusBar>
      </Explorer>

      <Taskbar>
        <StartButton aria-label="开始"><WindowsLogo /></StartButton>
        <TaskSearch>
          <Magnifier size={32} color="#111" sw={2.2} />
          搜索
        </TaskSearch>
        <TaskApps>
          <TaskApp><TaskView /></TaskApp>
          <TaskApp $w={102}><Edge size={48} /></TaskApp>
          <TaskApp $w={96} $active><ExplorerApp /></TaskApp>
          <TaskApp><StoreApp /></TaskApp>
          <TaskApp><MailApp /></TaskApp>
          <TaskApp><WpsApp /></TaskApp>
          <TaskApp><ChromeApp /></TaskApp>
        </TaskApps>
        <Tray>
          <TrayIcon $w={64}><NewsIcon /></TrayIcon>
          <TrayText $size={28} $w={90}>结果</TrayText>
          <TrayIcon $w={46}><Chevron dir="up" w={28} h={16} color="#fff" sw={2} /></TrayIcon>
          <TrayIcon $w={48}><SyncIcon /></TrayIcon>
          <TrayIcon $w={48}><GlobeOff /></TrayIcon>
          <TrayIcon $w={45}><Muted /></TrayIcon>
          <TrayText $size={32} $w={52}>英</TrayText>
          <Clock>17:31{'\n'}2024/12/3</Clock>
          <TrayIcon $w={72}><Notifications /></TrayIcon>
          <ShowDesktop />
        </Tray>
      </Taskbar>

      <Dialog>
        <DialogTitle>BitLocker (G:)</DialogTitle>
        <DialogText>输入密码以解锁此驱动器。</DialogText>
        <PasswordField>
          <PasswordInput type="password" aria-label="密码" />
          <Eye />
        </PasswordField>
        <MoreOptions>更多选项</MoreOptions>
        <UnlockButton>解锁</UnlockButton>
      </Dialog>

      <Toast>
        <ToastHead>
          <ToastIcon />
          <ToastApp>BitLocker 驱动器加密</ToastApp>
          <CloseIcon />
        </ToastHead>
        <ToastTitle>解锁驱动器 G:</ToastTitle>
        <ToastBody>此驱动器受 BitLocker 保护。</ToastBody>
      </Toast>
    </Desktop>
  );
}
